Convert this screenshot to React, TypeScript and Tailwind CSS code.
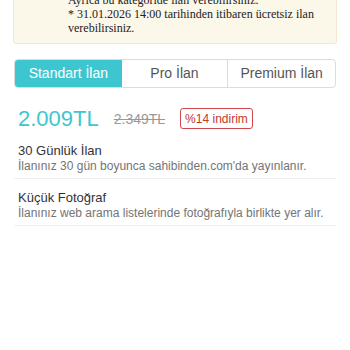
import React from "react";

export default function App() {
  return (
    <div className="w-[350px] h-[350px] overflow-hidden bg-white" style={{ fontFamily: "'Liberation Sans', Arial, sans-serif" }}>
      <div className="mx-[13px] -mt-[8px] bg-[#fcf8e9] border border-[#f1ead3] rounded-b-[3px] pl-[54px] pb-[8px] text-[12px] leading-[14px] text-[#222] whitespace-nowrap" style={{ fontFamily: "'Liberation Serif', serif" }}>
        <div>Ayrıca bu kategoride ilan verebilirsiniz.</div>
        <div>* 31.01.2026 14:00 tarihinden itibaren ücretsiz ilan</div>
        <div>verebilirsiniz.</div>
      </div>

      <div className="mx-[14px] mt-[15px] grid grid-cols-3 h-[29px] border border-[#dcdcdc] rounded-[4px] overflow-hidden text-[14px]">
        <div className="flex items-center justify-center bg-[#3ec6d0] text-white">Standart İlan</div>
        <div className="flex items-center justify-center text-[#555] border-r border-[#dcdcdc]">Pro İlan</div>
        <div className="flex items-center justify-center text-[#555]">Premium İlan</div>
      </div>

      <div className="mx-[14px] mt-[20px] h-[21px] flex items-center pl-[4px]">
        <span className="text-[22px] text-[#3ec6d0] leading-none">2.009TL</span>
        <span className="ml-[15px] text-[14px] text-[#999] line-through leading-none">2.349TL</span>
        <span className="ml-[15px] h-[21px] px-[4px] flex items-center border-[1.5px] border-[#d0484a] rounded-[3px] text-[12px] text-[#c0392b]">%14 indirim</span>
      </div>

      <div className="mx-[14px] mt-[14px]">
        <div className="px-[4px] pb-[4px] border-b border-[#efefef]">
          <div className="text-[13px] leading-[16px] text-[#333]">30 Günlük İlan</div>
          <div className="text-[12px] leading-[15px] text-[#747474]">İlanınız 30 gün boyunca sahibinden.com'da yayınlanır.</div>
        </div>
        <div className="px-[4px] pt-[11px] pb-[4px] border-b border-[#efefef]">
          <div className="text-[13px] leading-[16px] text-[#333]">Küçük Fotoğraf</div>
          <div className="text-[12px] leading-[15px] text-[#747474]">İlanınız web arama listelerinde fotoğrafıyla birlikte yer alır.</div>
        </div>
      </div>
    </div>
  );
}
